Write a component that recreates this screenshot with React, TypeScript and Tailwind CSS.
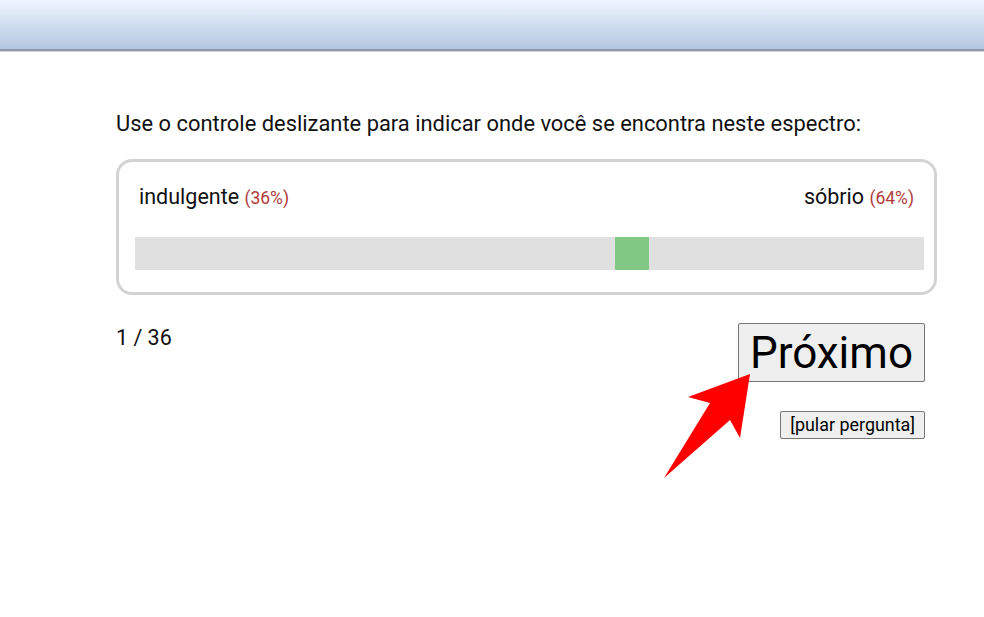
export default function App() {
  return (
    <div className="relative min-h-[617px] w-[984px] bg-white text-[#111]" style={{ fontFamily: "Roboto, 'Liberation Sans', sans-serif" }}>
      <div className="h-[49px] bg-gradient-to-b from-[#eef5fe] to-[#b4c7e1]" />
      <div className="h-[2px] bg-[#8e99aa]" />
      <div className="h-[1px] bg-[#d4d8de]" />
      <div className="ml-[116px] w-[821px]">
        <p className="mt-[60px] whitespace-nowrap text-[21.9px] leading-[24px]">Use o controle deslizante para indicar onde você se encontra neste espectro:</p>
        <div className="mt-[23px] rounded-[16px] border-[3px] border-[#d3d3d3] pt-[23px] pb-[22px] pl-[16px] pr-[10px]">
          <div className="flex items-center justify-between pl-[4px] pr-[10px] text-[21.5px] leading-[24px]">
            <span>indulgente <span className="text-[17.5px] text-[#b03a3a]">(36%)</span></span>
            <span>sóbrio <span className="text-[17.5px] text-[#b03a3a]">(64%)</span></span>
          </div>
          <div className="mt-[27px] flex h-[33px] bg-[#e0e0e0]">
            <div className="w-[480px]" />
            <div className="h-full w-[34px] bg-[#80c883]" />
          </div>
        </div>
        <div className="mt-[28px] flex justify-between pr-[12px]">
          <span className="mt-[3px] text-[21.5px] leading-[24px]">1 / 36</span>
          <div className="flex flex-col items-end">
            <button className="h-[59px] rounded-[2px] border border-[#767676] bg-[#efefef] px-[11px] text-[44px] leading-[52px] text-black">Próximo</button>
            <button className="mt-[29px] h-[28px] rounded-[2px] border border-[#767676] bg-[#efefef] px-[9px] text-[17.9px] leading-[20px] text-black">[pular pergunta]</button>
          </div>
        </div>
      </div>
      <svg className="absolute left-0 top-0" width="984" height="617" viewBox="0 0 984 617">
        <polygon points="750,374 688,397 710,403 664,478 730,420 740,438" fill="#ff0000" />
      </svg>
    </div>
  );
}
